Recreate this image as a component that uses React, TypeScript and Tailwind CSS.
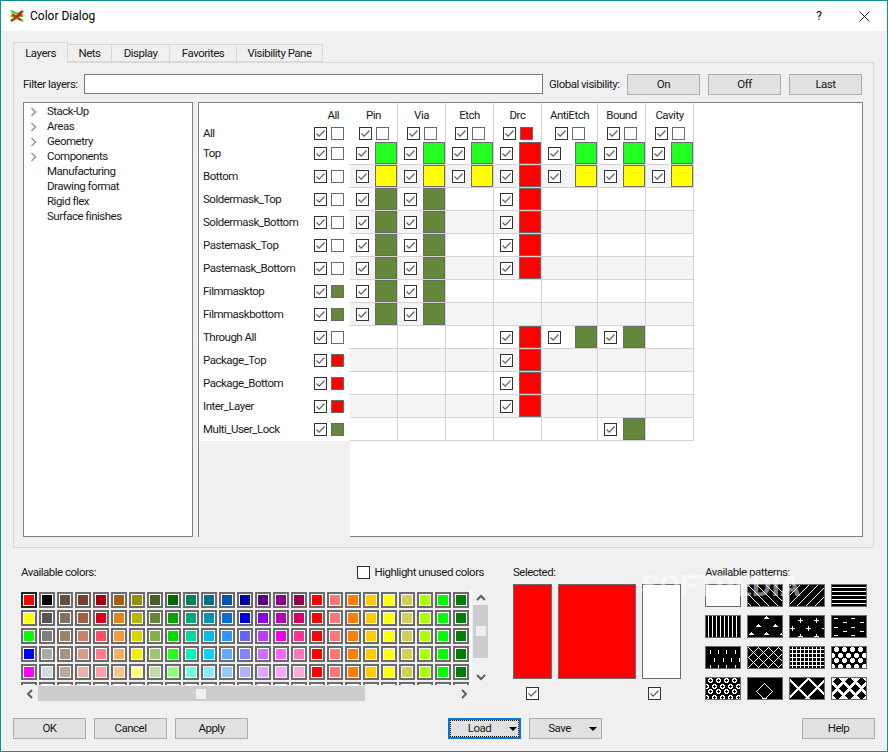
import { FC, ReactNode } from 'react';

const GREEN = '#22ff22';
const YELLOW = '#ffff00';
const RED = '#ff0000';
const OLIVE = '#64883a';
const WHITE = '#ffffff';

type Cell = string | null;

const COLUMNS = ['Pin', 'Via', 'Etch', 'Drc', 'AntiEtch', 'Bound', 'Cavity'];
const ALL_ROW = [WHITE, WHITE, WHITE, RED, WHITE, WHITE, WHITE];

const LAYERS: { name: string; swatch: string; cells: Cell[] }[] = [
	{ name: 'Top', swatch: WHITE, cells: [GREEN, GREEN, GREEN, RED, GREEN, GREEN, GREEN] },
	{ name: 'Bottom', swatch: WHITE, cells: [YELLOW, YELLOW, YELLOW, RED, YELLOW, YELLOW, YELLOW] },
	{ name: 'Soldermask_Top', swatch: WHITE, cells: [OLIVE, OLIVE, null, RED, null, null, null] },
	{ name: 'Soldermask_Bottom', swatch: WHITE, cells: [OLIVE, OLIVE, null, RED, null, null, null] },
	{ name: 'Pastemask_Top', swatch: WHITE, cells: [OLIVE, OLIVE, null, RED, null, null, null] },
	{ name: 'Pastemask_Bottom', swatch: WHITE, cells: [OLIVE, OLIVE, null, RED, null, null, null] },
	{ name: 'Filmmasktop', swatch: OLIVE, cells: [OLIVE, OLIVE, null, null, null, null, null] },
	{ name: 'Filmmaskbottom', swatch: OLIVE, cells: [OLIVE, OLIVE, null, null, null, null, null] },
	{ name: 'Through All', swatch: WHITE, cells: [null, null, null, RED, OLIVE, OLIVE, null] },
	{ name: 'Package_Top', swatch: RED, cells: [null, null, null, RED, null, null, null] },
	{ name: 'Package_Bottom', swatch: RED, cells: [null, null, null, RED, null, null, null] },
	{ name: 'Inter_Layer', swatch: RED, cells: [null, null, null, RED, null, null, null] },
	{ name: 'Multi_User_Lock', swatch: OLIVE, cells: [null, null, null, null, null, OLIVE, null] },
];

const TREE = [
	{ label: 'Stack-Up', arrow: true },
	{ label: 'Areas', arrow: true },
	{ label: 'Geometry', arrow: true },
	{ label: 'Components', arrow: true },
	{ label: 'Manufacturing', arrow: false },
	{ label: 'Drawing format', arrow: false },
	{ label: 'Rigid flex', arrow: false },
	{ label: 'Surface finishes', arrow: false },
];

// one array per column, top to bottom
const PALETTE = [
	['#ff0000', '#ffff00', '#00ff00', '#0000ff', '#ff00ff', '#00ffff'],
	['#000000', '#555555', '#808080', '#aaaaaa', '#d8d8d8', '#ffffff'],
	['#634f3f', '#86705f', '#9c846f', '#a99380', '#bba898', '#d8cbc0'],
	['#77402d', '#a75d42', '#c7826a', '#d69c88', '#e6b5a8', '#f2d4c8'],
	['#a50013', '#d80017', '#ff4d5c', '#ff7d88', '#ff9dab', '#ffcfd6'],
	['#a85f0d', '#e58212', '#f29c3e', '#f5b068', '#f6c890', '#fae0c0'],
	['#939307', '#b6b600', '#d8d800', '#f0f000', '#ffff85', '#ffffc8'],
	['#456029', '#64883a', '#81b04d', '#9ec672', '#c0dba6', '#dcecc8'],
	['#006b00', '#00a500', '#00dd00', '#22ff22', '#8cff80', '#c8ffc0'],
	['#00825f', '#00aa7f', '#00d89e', '#00f8b5', '#70ffd8', '#b8ffe8'],
	['#00708a', '#0094b8', '#00bce8', '#10d0ff', '#8ceaff', '#c0f4ff'],
	['#0055ad', '#006fdc', '#3095ff', '#62a9ff', '#95c8ff', '#c4e0ff'],
	['#00009a', '#0000dc', '#6464ff', '#8484ff', '#b0b0ff', '#d0d0ff'],
	['#590080', '#9000d8', '#bb3cff', '#cc70ff', '#dfa5ff', '#eed0ff'],
	['#8a008a', '#b800b8', '#f000f0', '#ff66ff', '#ffa5ff', '#ffd0ff'],
	['#96004b', '#d60068', '#ff3096', '#ff76ba', '#ffaad4', '#ffd5ea'],
	...['#ff0000', '#ff7777', '#ff8000', '#ffcc00', '#ffff00', '#cfcf5a', '#aaff00', '#00ff00', '#007f00'].map((c) =>
		Array<string>(6).fill(c)
	),
];

const Check: FC<{ className?: string }> = ({ className = '' }) => (
	<span className={`block h-[13px] w-[13px] shrink-0 border border-[#333333] bg-white ${className}`}>
		<svg viewBox="0 0 11 11" className="block h-[11px] w-[11px]">
			<path d="M1.5 5.5 L4.2 8.2 L9.5 2.5" fill="none" stroke="#5f5f5f" strokeWidth="1.2" />
		</svg>
	</span>
);

const SmallSwatch: FC<{ color: string }> = ({ color }) => (
	<span className="block h-[13px] w-[13px] shrink-0 border border-[#6b6b6b]" style={{ backgroundColor: color }} />
);

const Button: FC<{ children: ReactNode; className?: string }> = ({ children, className = '' }) => (
	<div className={`flex h-[21px] w-[73px] items-center justify-center border border-[#adadad] bg-[#e1e1e1] ${className}`}>
		{children}
	</div>
);

const Caret = () => <span className="block h-0 w-0 border-x-[4px] border-t-[4px] border-x-transparent border-t-black" />;

const Arrow: FC<{ d: string }> = ({ d }) => (
	<svg viewBox="0 0 10 10" className="block h-[10px] w-[10px]">
		<path d={d} fill="none" stroke="#606060" strokeWidth="2" />
	</svg>
);

// patterns are bitmaps: a test per pixel of the 34x21 tile says where it is white
type Test = (x: number, y: number) => boolean;

const bitmap = (test: Test) => {
	let d = '';
	for (let y = 0; y < 21; y++) {
		for (let x = 0; x < 34; x++) {
			if (test(x, y)) d += `M${x} ${y}h1v1h-1z`;
		}
	}
	return d;
};

const mod = (v: number, m: number) => ((v % m) + m) % m;

const near = (points: number[][], test: (dx: number, dy: number) => boolean): Test => (x, y) =>
	points.some(([px, py]) => test(x - px, y - py));

const BLOBS = [2, 8, 13, 19].flatMap((y, r) => (r % 2 ? [0, 8, 16, 24, 32] : [4, 12, 20, 28]).map((x) => [x, y]));
const plusShape = (dx: number, dy: number) =>
	(Math.abs(dx) <= 2 && Math.abs(dy) <= 1) || (Math.abs(dx) <= 1 && Math.abs(dy) <= 2);

const PATTERNS: Test[] = [
	() => true,
	(x, y) => mod(x - y, 9) === 0,
	(x, y) => mod(x + y, 9) === 0,
	(_, y) => y % 4 === 2,
	(x) => x % 4 === 2,
	near(
		[[18, 2], [10, 10], [27, 10], [3, 18], [18, 18], [34, 18]],
		(dx, dy) => dy <= 0 && dy >= -2 && Math.abs(dx) <= 2 + dy
	),
	near(
		[[10, 4], [26, 4], [2, 12], [18, 12], [34, 12], [10, 20], [26, 20]],
		(dx, dy) => (dy === 0 && Math.abs(dx) <= 2) || (dx === 0 && Math.abs(dy) <= 2)
	),
	near(
		[[2, 2], [19, 2], [11, 6], [28, 6], [2, 11], [19, 11], [11, 15], [28, 15], [2, 19], [19, 19]],
		(dx, dy) => dy === 0 && dx >= 0 && dx < 4
	),
	near(
		[[4, 3], [12, 3], [20, 3], [29, 3], [8, 11], [17, 11], [25, 11], [33, 11], [4, 18], [12, 18], [20, 18], [29, 18]],
		(dx, dy) => dx === 0 && dy >= 0 && dy < 4
	),
	(x, y) => mod(x - y, 10) === 0 || mod(x + y, 10) === 0,
	(x, y) => x % 4 === 2 || y % 4 === 2,
	near(BLOBS, plusShape),
	near(BLOBS, (dx, dy) => plusShape(dx, dy) && Math.abs(dx) + Math.abs(dy) > 1),
	(x, y) => Math.abs(x - 16) + Math.abs(y - 13) === 8 || (y === 20 && Math.abs(x - 16) <= 2),
	(x, y) =>
		Math.abs(x + y - 18) <= 1 || Math.abs(x - y - 18) <= 1 || Math.abs(x - y + 2) <= 1 || Math.abs(x + y - 36) <= 1,
	(x, y) =>
		!near(
			[[5, 3], [17, 3], [29, 3], [-1, 10], [11, 10], [23, 10], [35, 10], [5, 17], [17, 17], [29, 17]],
			(dx, dy) => Math.abs(dx) + Math.abs(dy) <= 4
		)(x, y),
];

const TABS = [
	{ label: 'Nets', width: 'w-[44px]' },
	{ label: 'Display', width: 'w-[58px]' },
	{ label: 'Favorites', width: 'w-[67px]' },
	{ label: 'Visibility Pane', width: 'w-[86px]' },
];

const App: FC = () => (
	<div className="relative flex h-[752px] w-[888px] flex-col whitespace-nowrap border border-[#0f8f8f] bg-[#f0f0f0] font-['Roboto',sans-serif] text-[11.5px] leading-[17px] tracking-[-0.5px] text-[#1a1a1a]">
		{/* title bar */}
		<div className="flex h-[30px] shrink-0 items-center bg-white pl-[8px]">
			<svg viewBox="0 0 16 16" className="h-[16px] w-[16px]">
				<path d="M2 3 L8 6 L14 3 M2 8 L14 8 M2 13 L8 10 L14 13" stroke="#1fd81f" strokeWidth="2" fill="none" />
				<path d="M2 13 L14 3 M3 6 L12 12 M4 11 L13 6" stroke="#ee1111" strokeWidth="2" fill="none" />
			</svg>
			<span className="ml-[5px] text-[12px] tracking-normal text-black">Color Dialog</span>
			<span className="ml-auto mr-[37px] text-[12px] tracking-normal text-black">?</span>
			<svg viewBox="0 0 11 11" className="mr-[17px] h-[11px] w-[11px]">
				<path d="M0.5 0.5 L10.5 10.5 M10.5 0.5 L0.5 10.5" stroke="#222222" />
			</svg>
		</div>

		<div className="flex flex-1 flex-col pl-[12px] pt-[11px]">
			{/* tabs */}
			<div className="relative z-10 flex h-[20px] items-end">
				<div className="mb-[-1px] flex h-[21px] w-[55px] items-center justify-center border border-b-0 border-[#d9d9d9] bg-[#f0f0f0]">Layers</div>
				{TABS.map((tab) => (
					<div key={tab.label} className={`flex h-[18px] items-center justify-center border border-l-0 border-[#d9d9d9] bg-[#f0f0f0] ${tab.width}`}>
						{tab.label}
					</div>
				))}
			</div>

			{/* tab panel */}
			<div className="h-[486px] w-[861px] border border-[#d9d9d9] pl-[9px] pt-[11px]">
				<div className="flex h-[21px] items-start">
					<span className="w-[61px] leading-[21px]">Filter layers:</span>
					<div className="h-[20px] w-[459px] border border-[#7a7a7a] bg-white" />
					<span className="ml-[6px] w-[78px] leading-[21px]">Global visibility:</span>
					<div className="flex gap-[8px]">
						<Button>On</Button>
						<Button>Off</Button>
						<Button>Last</Button>
					</div>
				</div>

				<div className="mt-[7px] flex gap-[5px]">
					{/* layer tree */}
					<div className="h-[435px] w-[170px] border border-[#828282] bg-white pt-[1px]">
						{TREE.map((item) => (
							<div key={item.label} className="flex h-[15px] items-center pl-[6px] leading-[15px]">
								<span className="w-[17px]">
									{item.arrow && (
										<svg viewBox="0 0 8 10" className="block h-[10px] w-[8px]">
											<path d="M1.5 1 L5.5 5 L1.5 9" fill="none" stroke="#9a9a9a" strokeWidth="1.6" />
										</svg>
									)}
								</span>
								{item.label}
							</div>
						))}
					</div>

					{/* visibility table */}
					<div className="h-[435px] w-[665px] border border-[#828282] bg-white">
						<div className="grid w-[495px] grid-cols-[151px_48px_48px_48px_48px_56px_48px_48px]">
							<div className="flex h-[21px] items-end justify-end pr-[11px]">All</div>
							{COLUMNS.map((name) => (
								<div key={name} className="flex h-[21px] items-end justify-center border-r border-[#d4d4d4]">
									{name}
								</div>
							))}

							<div className="flex h-[18px] items-center justify-between pl-[4px] pr-[6px]">
								All
								<span className="flex gap-[4px]">
									<Check />
									<SmallSwatch color={WHITE} />
								</span>
							</div>
							{ALL_ROW.map((color, i) => (
								<div key={COLUMNS[i]} className="flex h-[18px] items-center justify-center gap-[4px] border-r border-[#d4d4d4]">
									<Check />
									<SmallSwatch color={color} />
								</div>
							))}

							{LAYERS.map((layer, r) => (
								<div key={layer.name} className="contents">
									<div className="flex h-[23px] items-center justify-between pl-[4px] pr-[6px]">
										{layer.name}
										<span className="flex gap-[4px]">
											<Check />
											<SmallSwatch color={layer.swatch} />
										</span>
									</div>
									{layer.cells.map((color, c) => (
										<div
											key={COLUMNS[c]}
											className={`flex h-[23px] items-center justify-between border-b border-r border-[#d4d4d4] pl-[6px] ${r % 2 ? 'bg-[#f4f4f4]' : 'bg-white'}`}
										>
											{color && (
												<>
													<Check />
													<span className="block h-[22px] w-[22px] border border-[#6b6b6b]" style={{ backgroundColor: color }} />
												</>
											)}
										</div>
									))}
								</div>
							))}
						</div>
						<div className="h-[96px] w-[151px] bg-[#f0f0f0]" />
					</div>
				</div>
			</div>

			{/* colors and patterns */}
			<div className="flex pl-[8px] pt-[16px]">
				<div className="w-[467px]">
					<div className="flex h-[16px] w-[463px] items-center justify-between">
						<span>Available colors:</span>
						<span className="flex items-center gap-[5px]">
							<span className="block h-[13px] w-[13px] border border-[#333333] bg-white" />
							Highlight unused colors
						</span>
					</div>
					<div className="mt-[10px] flex">
						<div className="h-[95px] w-[452px] overflow-hidden border-r-2 border-white pt-[2px]">
							<div className="grid w-[448px] grid-cols-[repeat(25,16px)] gap-[2px]">
								{PALETTE[0].flatMap((_, row) =>
									PALETTE.map((col, c) => (
										<div
											key={`${row}-${c}`}
											className={`h-[16px] w-[16px] border-2 bg-white p-[1px] ${row === 0 && c === 0 ? 'border-[#222222]' : 'border-[#6b6b6b]'}`}
										>
											<div className="h-full w-full" style={{ backgroundColor: col[row] }} />
										</div>
									))
								)}
							</div>
						</div>
						<div className="ml-[1px] flex h-[95px] w-[15px] flex-col items-center">
							<div className="flex h-[15px] items-center justify-center">
								<Arrow d="M1 7 L5 3 L9 7" />
							</div>
							<div className="flex h-[53px] w-[15px] justify-center bg-[#cdcdcd] pt-[21px]">
								<div className="h-[10px] w-[10px] bg-[#f0f0f0]" />
							</div>
							<div className="flex flex-1 items-end justify-center pb-[3px]">
								<Arrow d="M1 3 L5 7 L9 3" />
							</div>
						</div>
					</div>
					<div className="mt-[1px] flex h-[15px] w-[451px] items-center">
						<div className="flex w-[17px] justify-center">
							<Arrow d="M7 1 L3 5 L7 9" />
						</div>
						<div className="flex h-[15px] w-[327px] items-center bg-[#cdcdcd] pl-[158px]">
							<div className="h-[10px] w-[10px] bg-[#f0f0f0]" />
						</div>
						<div className="flex flex-1 justify-end pr-[3px]">
							<Arrow d="M3 1 L7 5 L3 9" />
						</div>
					</div>
				</div>

				<div className="ml-[25px] w-[168px]">
					<div className="h-[16px]">Selected:</div>
					<div className="mt-[4px] flex gap-[6px]">
						<div className="h-[95px] w-[39px] border border-[#6b6b6b] bg-[#ff0000]" />
						<div className="h-[95px] w-[78px] border border-[#6b6b6b] bg-[#ff0000]" />
						<div className="h-[95px] w-[39px] border border-[#6b6b6b] bg-white" />
					</div>
					<div className="mt-[8px] flex pl-[13px]">
						<Check />
						<Check className="ml-[109px]" />
					</div>
				</div>

				<div className="ml-[24px]">
					<div className="h-[16px]">Available patterns:</div>
					<div className="mt-[4px] grid grid-cols-[repeat(4,36px)] gap-x-[6px] gap-y-[8px]">
						{PATTERNS.map((test, i) => (
							<div key={i} className="h-[23px] w-[36px] border border-[#6b6b6b]">
								<svg viewBox="0 0 34 21" shapeRendering="crispEdges" className="block h-[21px] w-[34px]">
									<rect width="34" height="21" fill="#000" />
									<path d={bitmap(test)} fill="#fff" />
								</svg>
							</div>
						))}
					</div>
				</div>
			</div>

			{/* dialog buttons */}
			<div className="mt-[17px] flex w-[862px] justify-between">
				<div className="flex gap-[8px]">
					<Button>OK</Button>
					<Button>Cancel</Button>
					<Button>Apply</Button>
				</div>
				<div className="flex gap-[8px]">
					<div className="flex h-[21px] w-[73px] items-center border-2 border-[#0078d7] bg-[#e1e1e1] outline-1 -outline-offset-3 outline-dotted outline-black">
						<span className="w-[59px] text-center">Load</span>
						<Caret />
					</div>
					<div className="flex h-[21px] w-[73px] items-center border border-[#adadad] bg-[#e1e1e1]">
						<span className="w-[59px] text-center">Save</span>
						<Caret />
					</div>
				</div>
				<Button>Help</Button>
			</div>
		</div>

		{/* faint watermark over the patterns */}
		<div className="pointer-events-none absolute left-[640px] top-[568px] text-[30px] font-bold leading-[34px] tracking-normal text-white opacity-50">
			SOFTPEDIA
		</div>
	</div>
);

export default App;
